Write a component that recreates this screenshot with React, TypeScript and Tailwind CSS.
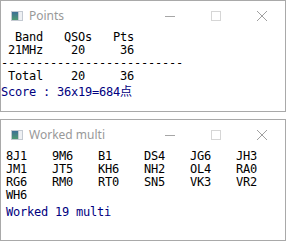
import React from "react"

const mono = { fontFamily: '"DejaVu Sans Mono", "Noto Sans CJK JP", monospace' }

function AppIcon() {
  return (
    <svg width="12" height="10" viewBox="0 0 12 10" className="shrink-0">
      <defs>
        <linearGradient id="ig" x1="0" y1="0" x2="0" y2="1">
          <stop offset="0" stopColor="#3d6f96" />
          <stop offset="1" stopColor="#4f9a72" />
        </linearGradient>
      </defs>
      <rect x="0" y="0" width="12" height="10" fill="#c3c9d1" />
      <rect x="1" y="1" width="6" height="8" fill="url(#ig)" />
      <rect x="8" y="1" width="3" height="8" fill="#eef0f3" />
    </svg>
  )
}

function TitleBar({ title }: { title: string }) {
  return (
    <div className="flex h-[30px] items-center">
      <div className="flex flex-1 items-center gap-[6px] pl-[10px]">
        <AppIcon />
        <span className="text-[12px] text-[#999999]" style={{ fontFamily: '"Noto Sans", sans-serif' }}>
          {title}
        </span>
      </div>
      <div className="flex h-full w-[46px] items-center justify-center">
        <svg width="10" height="10" viewBox="0 0 10 10">
          <line x1="0" y1="5.5" x2="10" y2="5.5" stroke="#a6a6a6" strokeWidth="1" />
        </svg>
      </div>
      <div className="flex h-full w-[46px] items-center justify-center">
        <svg width="10" height="10" viewBox="0 0 10 10">
          <rect x="0.5" y="0.5" width="9" height="9" fill="none" stroke="#d6d6d6" strokeWidth="1" />
        </svg>
      </div>
      <div className="flex h-full w-[46px] items-center justify-center">
        <svg width="10" height="10" viewBox="0 0 10 10">
          <path d="M0 0 L10 10 M10 0 L0 10" stroke="#a0a0a0" strokeWidth="1" />
        </svg>
      </div>
    </div>
  )
}

const multis = [
  "8J1", "9M6", "B1", "DS4", "JG6", "JH3",
  "JM1", "JT5", "KH6", "NH2", "OL4", "RA0",
  "RG6", "RM0", "RT0", "SN5", "VK3", "VR2",
  "WH6",
]

export default function App() {
  return (
    <div className="flex h-[246px] w-[292px] flex-col bg-white">
      <div className="h-[112px] w-[286px] overflow-hidden border border-[#a9a9a9] bg-white">
        <TitleBar title="Points" />
        <div className="whitespace-pre text-[12px] leading-[13px] tracking-[-0.22px] text-black" style={mono}>
          <div>{"  Band   QSOs   Pts"}</div>
          <div>{" 21MHz    20     36"}</div>
          <div>{"--------------------------"}</div>
          <div>{" Total    20     36"}</div>
          <div className="mt-[3px] text-[#000080]">{"Score : 36x19=684点"}</div>
        </div>
      </div>
      <div className="mt-[7px] h-[122px] w-[286px] overflow-hidden border border-[#a9a9a9] bg-white">
        <TitleBar title="Worked multi" />
        <div className="pl-[5px] text-[12px] leading-[13px] tracking-[-0.22px] text-black" style={mono}>
          <div className="grid grid-cols-[repeat(6,46px)]">
            {multis.map((m) => (
              <div key={m}>{m}</div>
            ))}
          </div>
          <div className="mt-[4px] text-[#000080]">Worked 19 multi</div>
        </div>
      </div>
    </div>
  )
}
